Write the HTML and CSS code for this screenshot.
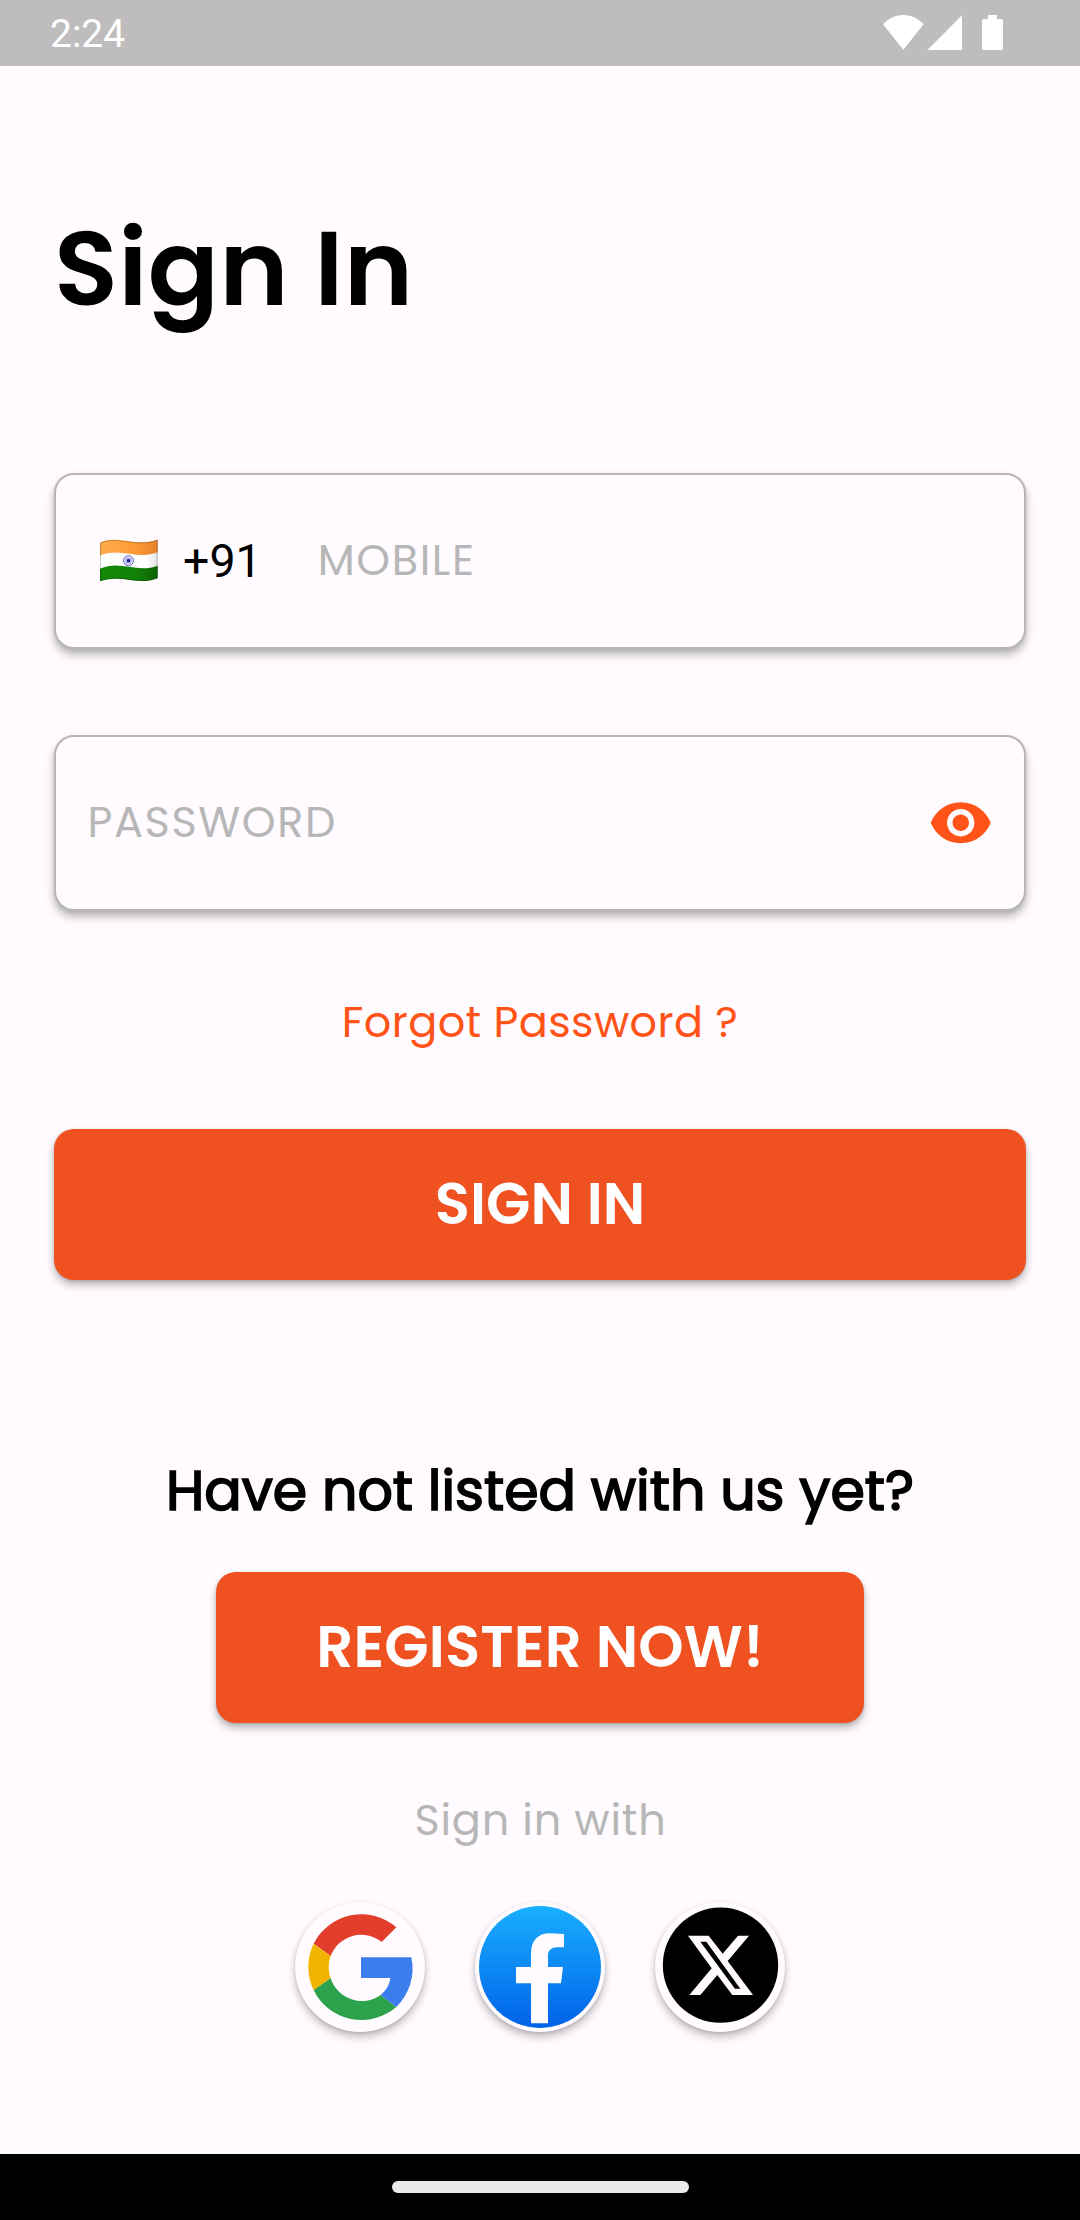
FILE: index.html
```html
<!DOCTYPE html>
<html lang="en">
<head>
<meta charset="utf-8">
<title>Sign In</title>
<link rel="stylesheet" href="styles.css">
</head>
<body>
<header class="status-bar">
  <span class="clock">2:24</span>
  <svg class="status-icons" viewBox="39 42 360 111" fill="#fff" aria-hidden="true">
    <path d="M100 149L39 73C75 36 125 36 161 73Z"/>
    <path d="M276 46V150H172Z"/>
    <rect x="336" y="57" width="63" height="93" rx="5"/>
    <rect x="354" y="45" width="27" height="14"/>
  </svg>
</header>

<main class="screen">
  <h1 class="title">Sign In</h1>

  <div class="field field-mobile">
    <svg class="flag" viewBox="180 236 174 129" role="img" aria-label="India">
      <defs>
        <linearGradient id="saffron"><stop offset="0" stop-color="#ffab4a"/><stop offset=".6" stop-color="#ff9a38"/><stop offset="1" stop-color="#e5832a"/></linearGradient>
        <linearGradient id="white"><stop offset="0" stop-color="#fff"/><stop offset=".8" stop-color="#fff"/><stop offset="1" stop-color="#e2e2e2"/></linearGradient>
        <linearGradient id="green"><stop offset="0" stop-color="#138808"/><stop offset=".6" stop-color="#128207"/><stop offset="1" stop-color="#0c6404"/></linearGradient>
      </defs>
      <path fill="url(#white)" d="M180 247C235 222 285 262 353 238V354C290 378 250 340 180 363Z"/>
      <path fill="url(#saffron)" d="M180 247C235 222 285 262 353 238V276C290 300 245 260 180 285Z"/>
      <path fill="url(#green)" d="M180 325C240 298 290 340 353 316V354C290 378 250 340 180 363Z"/>
      <path fill="none" stroke="#000" stroke-opacity=".22" stroke-width="3" d="M181.500 248C235 224 285 264 351.500 240V353C290 376 250 339 181.500 361Z"/>
      <circle cx="265.500" cy="301" r="15" fill="#e8e8fa" stroke="#4a46b8" stroke-width="2.500"/>
      <circle cx="265.500" cy="301" r="9.500" fill="#a9a7e0"/>
      <circle cx="265.500" cy="301" r="5" fill="#221e9c"/>
    </svg>
    <span class="dial-code">+91</span>
    <span class="placeholder">MOBILE</span>
  </div>

  <div class="field field-password">
    <span class="placeholder">PASSWORD</span>
    <svg class="eye" viewBox="0 0 24 24" fill="#ff5317" aria-hidden="true">
      <path d="M12 4.500C7 4.500 2.730 7.610 1 12c1.730 4.390 6 7.500 11 7.500s9.270-3.110 11-7.500c-1.730-4.390-6-7.500-11-7.500zM12 17c-2.760 0-5-2.240-5-5s2.240-5 5-5 5 2.240 5 5-2.240 5-5 5zm0-8c-1.660 0-3 1.340-3 3s1.340 3 3 3 3-1.340 3-3-1.340-3-3-3z"/>
    </svg>
  </div>

  <a class="forgot">Forgot Password ?</a>
  <button class="button button-signin">SIGN IN</button>

  <h2 class="prompt">Have not listed with us yet?</h2>
  <button class="button button-register">REGISTER NOW!</button>

  <p class="with">Sign in with</p>
  <div class="socials">
    <button class="social" aria-label="Google">
      <svg viewBox="15 35 390 390">
        <path fill="#e33e2b" d="M71 160A160 160 0 0 1 319 111L275 155A98 98 0 0 0 122 197Z"/>
        <path fill="#f1b500" d="M71 160A160 160 0 0 0 71 300L122 264A98 98 0 0 1 122 197Z"/>
        <path fill="#2ca24c" d="M71 300A160 160 0 0 0 319 350L272 314A98 98 0 0 1 122 264Z"/>
        <path fill="#3b7ded" d="M213 201H364A160 160 0 0 1 319 350L272 314A77 77 0 0 0 301 263H213Z"/>
      </svg>
    </button>
    <button class="social" aria-label="Facebook">
      <svg viewBox="15 35 390 390">
        <defs><linearGradient id="fb" x2="0" y2="1"><stop offset="0" stop-color="#19afff"/><stop offset="1" stop-color="#0062e8"/></linearGradient></defs>
        <circle cx="210" cy="230" r="183" fill="url(#fb)"/>
        <path fill="#fffbff" d="M183 399V279H138V230H183V190C183 150 205 129 238 129L282 131V171H262C245 171 234 180 234 195V230H279L273 279H234V399Z"/>
      </svg>
    </button>
    <button class="social" aria-label="X">
      <svg viewBox="555 35 390 390">
        <circle cx="751.500" cy="224.500" r="173" fill="#000"/>
        <path fill="#fffbff" fill-rule="evenodd" d="M654 136H716L758 190L804 136H837L773 212L849 314H787L742 254L691 314H658L725 234ZM691 154L795 295H811L709 154Z"/>
      </svg>
    </button>
  </div>
</main>

<footer class="nav-bar"><div class="nav-handle"></div></footer>
</body>
</html>
```
FILE: styles.css
```css
* { box-sizing: border-box; }

body {
  margin: 0;
  width: 1080px;
  height: 2220px;
  display: flex;
  flex-direction: column;
  background: #fffbff;
  font-family: Poppins, Inter, sans-serif;
  font-size: 43px;
  color: #000;
}

.status-bar {
  height: 66px;
  padding: 0 77px 0 50px;
  display: flex;
  align-items: center;
  justify-content: space-between;
  background: #bebcbd;
}
.clock {
  font: 39px/1 Roboto, sans-serif;
  color: #fff;
  padding-top: 3px;
}
.status-icons { width: 120px; height: 37px; margin-bottom: 1px; }

.screen {
  flex: 1;
  padding: 142px 54px 0;
  display: flex;
  flex-direction: column;
  align-items: center;
}

.title {
  align-self: flex-start;
  margin: 0 0 144px;
  font-size: 105px;
  line-height: 121px;
  font-weight: 600;
  letter-spacing: 0.3px;
}

.field {
  width: 100%;
  height: 176px;
  display: flex;
  align-items: center;
  border: 2px solid #b7b7b7;
  border-radius: 20px;
  background: #fffbff;
  box-shadow: 0 6px 10px rgba(0, 0, 0, 0.26), 0 2px 4px rgba(0, 0, 0, 0.08);
}
.field-mobile { padding-left: 44px; margin-bottom: 86px; }
.field-password {
  padding: 0 31px 0 31.500px;
  justify-content: space-between;
  margin-bottom: 81px;
}
.flag { width: 58px; height: 43px; margin-bottom: 2px; }
.dial-code {
  margin: 0 56px 0 25px;
  font: 46.500px/1 Roboto, sans-serif;
}
.placeholder {
  line-height: 60px;
  padding-bottom: 2px;
  letter-spacing: 1.600px;
  color: #b7b7b7;
}
.eye { width: 65.500px; height: 65.500px; }

.forgot {
  margin-bottom: 77px;
  line-height: 60px;
  letter-spacing: 0.400px;
  color: #ff5317;
}

.button {
  height: 151px;
  padding: 0 0 2px;
  border: 0;
  border-radius: 20px;
  background: #ef5120;
  color: #fff;
  font: 600 57.750px/1 Poppins, Inter, sans-serif;
  box-shadow: 0 5px 8px rgba(0, 0, 0, 0.28), 0 1px 3px rgba(0, 0, 0, 0.12);
}
.button-signin { width: 100%; margin-bottom: 171px; }
.button-register { width: 648px; margin-bottom: 67px; letter-spacing: 0.160px; }

.prompt {
  margin: 0 0 41px;
  font-size: 55.400px;
  line-height: 80px;
  font-weight: 400;
  -webkit-text-stroke: 1.700px #000;
}

.with {
  margin: 0 0 51.500px;
  padding-left: 1px;
  line-height: 60px;
  letter-spacing: 0.800px;
  color: #b7b7b7;
}

.socials { display: flex; gap: 50px; }
.social {
  width: 130px;
  height: 130px;
  padding: 0;
  border: 0;
  border-radius: 50%;
  background: #fffbff;
  box-shadow: 0 5px 8px rgba(0, 0, 0, 0.25), 0 1px 3px rgba(0, 0, 0, 0.12);
}
.social svg { display: block; width: 130px; height: 130px; }

.nav-bar {
  height: 66px;
  display: flex;
  align-items: center;
  justify-content: center;
  background: #000;
}
.nav-handle {
  width: 297px;
  height: 11.500px;
  border-radius: 6px;
  background: #eaeaea;
}
```
